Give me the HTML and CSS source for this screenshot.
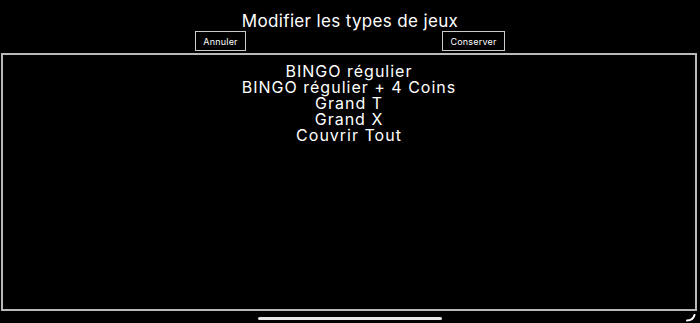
FILE: index.html
```html
<!DOCTYPE html>
<html lang="fr">
<head>
<meta charset="utf-8">
<title>Modifier les types de jeux</title>
<link rel="stylesheet" href="styles.css">
</head>
<body>
<div class="screen">
  <header class="header">
    <h1 class="title">Modifier les types de jeux</h1>
    <div class="actions">
      <button class="btn btn-cancel">Annuler</button>
      <button class="btn btn-save">Conserver</button>
    </div>
  </header>
  <main class="panel">
    <ul class="game-list">
      <li>BINGO régulier</li>
      <li>BINGO régulier + 4 Coins</li>
      <li>Grand T</li>
      <li>Grand X</li>
      <li>Couvrir Tout</li>
    </ul>
  </main>
  <footer class="footer">
    <div class="home-indicator"></div>
    <svg class="corner" width="10" height="8" viewBox="0 0 10 8"><path d="M1 6.5 C5 6.5 7.5 4.5 8.5 1" fill="none" stroke="#fff" stroke-width="2" stroke-linecap="round"/></svg>
  </footer>
</div>
</body>
</html>
```
FILE: styles.css
```css
html, body {
  margin: 0;
  padding: 0;
  background: #000;
}
body {
  font-family: Inter, "Liberation Sans", Arial, sans-serif;
  color: #fff;
}
.screen {
  width: 700px;
  height: 323px;
  display: flex;
  flex-direction: column;
  position: relative;
  overflow: hidden;
}
.header {
  display: flex;
  flex-direction: column;
  align-items: center;
}
.title {
  margin: 12px 0 0;
  font-size: 17px;
  font-weight: normal;
  line-height: 18px;
  letter-spacing: 0.35px;
}
.actions {
  display: flex;
  gap: 196px;
  margin-top: 1px;
}
.btn {
  background: #000;
  color: #fff;
  border: 1px solid #ccc;
  font-family: Inter, "Liberation Sans", Arial, sans-serif;
  font-size: 9px;
  height: 20px;
  padding: 0;
  letter-spacing: 0.2px;
}
.btn-cancel { width: 51px; }
.btn-save { width: 63px; }
.panel {
  margin: 2px 1px 0 1px;
  height: 254px;
  border: 2px solid #b9b9b9;
  width: 692px;
}
.game-list {
  list-style: none;
  margin: 0;
  padding: 8px 0 0;
  text-align: center;
  font-size: 16px;
  line-height: 16px;
  letter-spacing: 1px;
}
.footer {
  position: relative;
  flex: 1;
}
.home-indicator {
  position: absolute;
  left: 258px;
  top: 6px;
  width: 184px;
  height: 3px;
  border-radius: 2px;
  background: #e6e6e6;
}
.corner {
  position: absolute;
  right: 4px;
  top: 3px;
}
```
